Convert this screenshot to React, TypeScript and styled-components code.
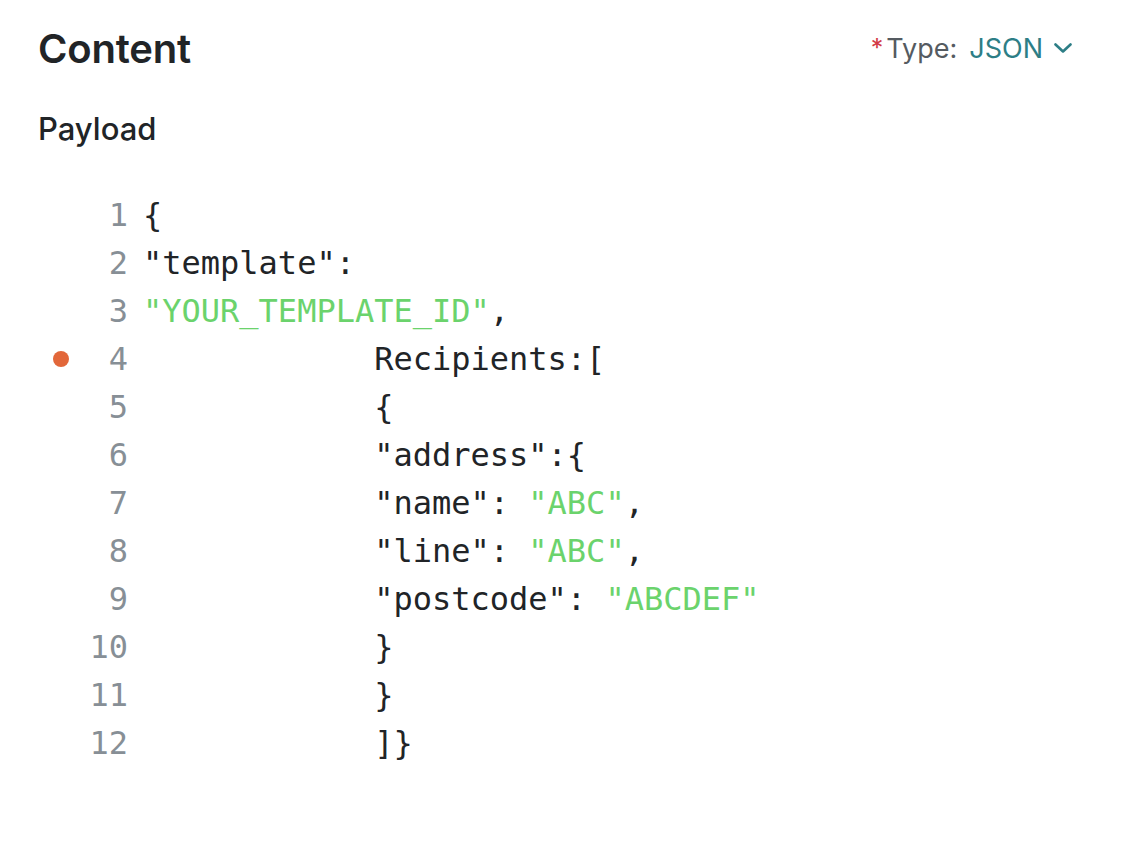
import React from "react";
import styled, { createGlobalStyle } from "styled-components";

const Global = createGlobalStyle`
  html, body { margin: 0; padding: 0; background: #ffffff; }
  body { font-family: Inter, "Open Sans", sans-serif; color: #212427; }
`;

const Page = styled.div`
  width: 1138px;
  height: 844px;
  box-sizing: border-box;
  padding: 22px 38px 0 38px;
`;

const Header = styled.div`
  display: flex;
  align-items: center;
  justify-content: space-between;
  height: 52px;
`;

const Title = styled.h1`
  margin: 0;
  font-size: 40px;
  font-weight: 600;
  letter-spacing: -0.2px;
  color: #212427;
`;

const TypeSelect = styled.div`
  display: flex;
  align-items: center;
  font-size: 27px;
  margin-right: 28px;
  color: #555b61;
`;

const Required = styled.span`
  color: #d23a45;
  margin-right: 3px;
  font-size: 25px;
`;

const TypeValue = styled.span`
  color: #2d7e86;
  margin-left: 12px;
  display: flex;
  align-items: center;
  gap: 11px;
`;

const Subtitle = styled.h2`
  margin: 36px 0 0 0;
  font-size: 31px;
  font-weight: 500;
  color: #212427;
`;

const Editor = styled.div`
  margin-top: 44px;
  font-family: "DejaVu Sans Mono", monospace;
  font-size: 32px;
  line-height: 48px;
`;

const Line = styled.div`
  display: flex;
  align-items: center;
  height: 48px;
`;

const Marker = styled.span<{ $active?: boolean }>`
  width: 16px;
  height: 16px;
  border-radius: 50%;
  margin-left: 15px;
  background: ${(p) => (p.$active ? "#e2673a" : "transparent")};
`;

const LineNo = styled.span`
  width: 59px;
  text-align: right;
  color: #878f96;
  margin-right: 15px;
`;

const Code = styled.span`
  white-space: pre;
  color: #212427;
`;

const Str = styled.span`
  color: #6bd36c;
`;

type Seg = string | { s: string };
const lines: Seg[][] = [
  ["{"],
  ['"template":'],
  [{ s: '"YOUR_TEMPLATE_ID"' }, ","],
  ["            Recipients:["],
  ["            {"],
  ['            "address":{'],
  ['            "name": ', { s: '"ABC"' }, ","],
  ['            "line": ', { s: '"ABC"' }, ","],
  ['            "postcode": ', { s: '"ABCDEF"' }],
  ["            }"],
  ["            }"],
  ["            ]}"],
];

const Chevron = () => (
  <svg width="18" height="12" viewBox="0 0 18 12" fill="none">
    <path d="M1.5 2.5l7.5 7 7.5-7" stroke="#2d7e86" strokeWidth="2.6" strokeLinecap="round" strokeLinejoin="round" />
  </svg>
);

export default function App() {
  return (
    <Page>
      <Global />
      <Header>
        <Title>Content</Title>
        <TypeSelect>
          <Required>*</Required>
          Type:
          <TypeValue>
            JSON
            <Chevron />
          </TypeValue>
        </TypeSelect>
      </Header>
      <Subtitle>Payload</Subtitle>
      <Editor>
        {lines.map((segs, i) => (
          <Line key={i}>
            <Marker $active={i === 3} />
            <LineNo>{i + 1}</LineNo>
            <Code>
              {segs.map((seg, j) =>
                typeof seg === "string" ? (
                  <React.Fragment key={j}>{seg}</React.Fragment>
                ) : (
                  <Str key={j}>{seg.s}</Str>
                )
              )}
            </Code>
          </Line>
        ))}
      </Editor>
    </Page>
  );
}
